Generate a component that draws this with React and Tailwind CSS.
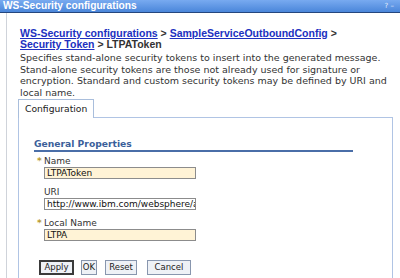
const body = { fontFamily: '"DejaVu Sans", Verdana, sans-serif' };
const arial = { fontFamily: '"Liberation Sans", Arial, sans-serif' };

const Field = ({ label, required, value, yellow }) => (
  <div className="mb-[8px]">
    <div className="flex h-[11px] items-center text-[9px] leading-[11px] text-[#333]">
      <span className="w-[10px] pl-[3px] text-[9px] font-bold text-[#b89a30] leading-[11px]">
        {required ? "*" : ""}
      </span>
      <span>{label}</span>
    </div>
    <div
      className={`ml-[10px] h-[12px] w-[152px] border border-[#8c8c8c] px-[2px] text-[9px] leading-[10px] text-[#111] overflow-hidden whitespace-nowrap ${
        yellow ? "bg-[#fff3d6]" : "bg-white"
      }`}
    >
      {value}
    </div>
  </div>
);

const Btn = ({ children, focused, w }) => (
  <button
    className={`h-[15px] ${w} flex items-center justify-center text-[8.5px] leading-none text-[#222] bg-[#eef1f6] ${
      focused ? "border-2 border-[#3a3a3a]" : "border border-[#8896ae]"
    }`}
  >
    {children}
  </button>
);

export default function App() {
  return (
    <div className="w-[400px] h-[278px] bg-white overflow-hidden" style={body}>
      <div className="h-[13px] bg-gradient-to-b from-[#78aaf0] to-[#4a86da] border-b border-[#24467e] flex items-center justify-between pl-[3px] pr-[6px]">
        <span className="text-[10.2px] font-bold text-white leading-none" style={arial}>
          WS-Security configurations
        </span>
        <span className="text-[7px] text-[#e4eefc] leading-none">? –</span>
      </div>
      <div className="ml-[6px] border-l border-[#cfd3da] h-[265px] pl-[11px] pt-[15px]">
        <div
          className="ml-[2px] text-[10.5px] font-bold leading-[11px] text-[#333] whitespace-nowrap"
          style={arial}
        >
          <a className="text-[#2030c0] underline">WS-Security configurations</a> &gt;{" "}
          <a className="text-[#2030c0] underline">SampleServiceOutboundConfig</a> &gt;
          <br />
          <a className="text-[#2030c0] underline">Security Token</a> &gt; LTPAToken
        </div>
        <p className="ml-[2px] mt-[2px] text-[9.5px] leading-[11.5px] text-[#333] whitespace-nowrap">
          Specifies stand-alone security tokens to insert into the generated message.
          <br />
          Stand-alone security tokens are those not already used for signature or
          <br />
          encryption. Standard and custom security tokens may be defined by URI and
          <br />
          local name.
        </p>
        <div className="mt-[1px] flex">
          <div className="h-[19px] pl-[6px] pr-[6px] border border-b-0 border-[#a9bedc] bg-white text-[9.2px] leading-[17px] text-[#222]">
            Configuration
          </div>
        </div>
        <div className="w-[375px] h-[170px] border border-[#b0c4e4] -mt-[1px] pl-[15px] pt-[20px]">
          <div className="w-[319px] border-b-2 border-[#4a6ea8] text-[9.2px] font-bold text-[#3b5f9a] leading-[12px]">
            General Properties
          </div>
          <div className="mt-[4px]">
            <Field label="Name" required value="LTPAToken" yellow />
            <Field label="URI" value="http://www.ibm.com/websphere/appserver/tokentype/5.0.2" />
            <Field label="Local Name" required value="LTPA" yellow />
          </div>
          <div className="mt-[19px] ml-[5px] flex">
            <Btn focused w="w-[35px]">Apply</Btn>
            <div className="w-[7px]" />
            <Btn w="w-[16px]">OK</Btn>
            <div className="w-[8px]" />
            <Btn w="w-[32px]">Reset</Btn>
            <div className="w-[10px]" />
            <Btn w="w-[44px]">Cancel</Btn>
          </div>
        </div>
      </div>
    </div>
  );
}
